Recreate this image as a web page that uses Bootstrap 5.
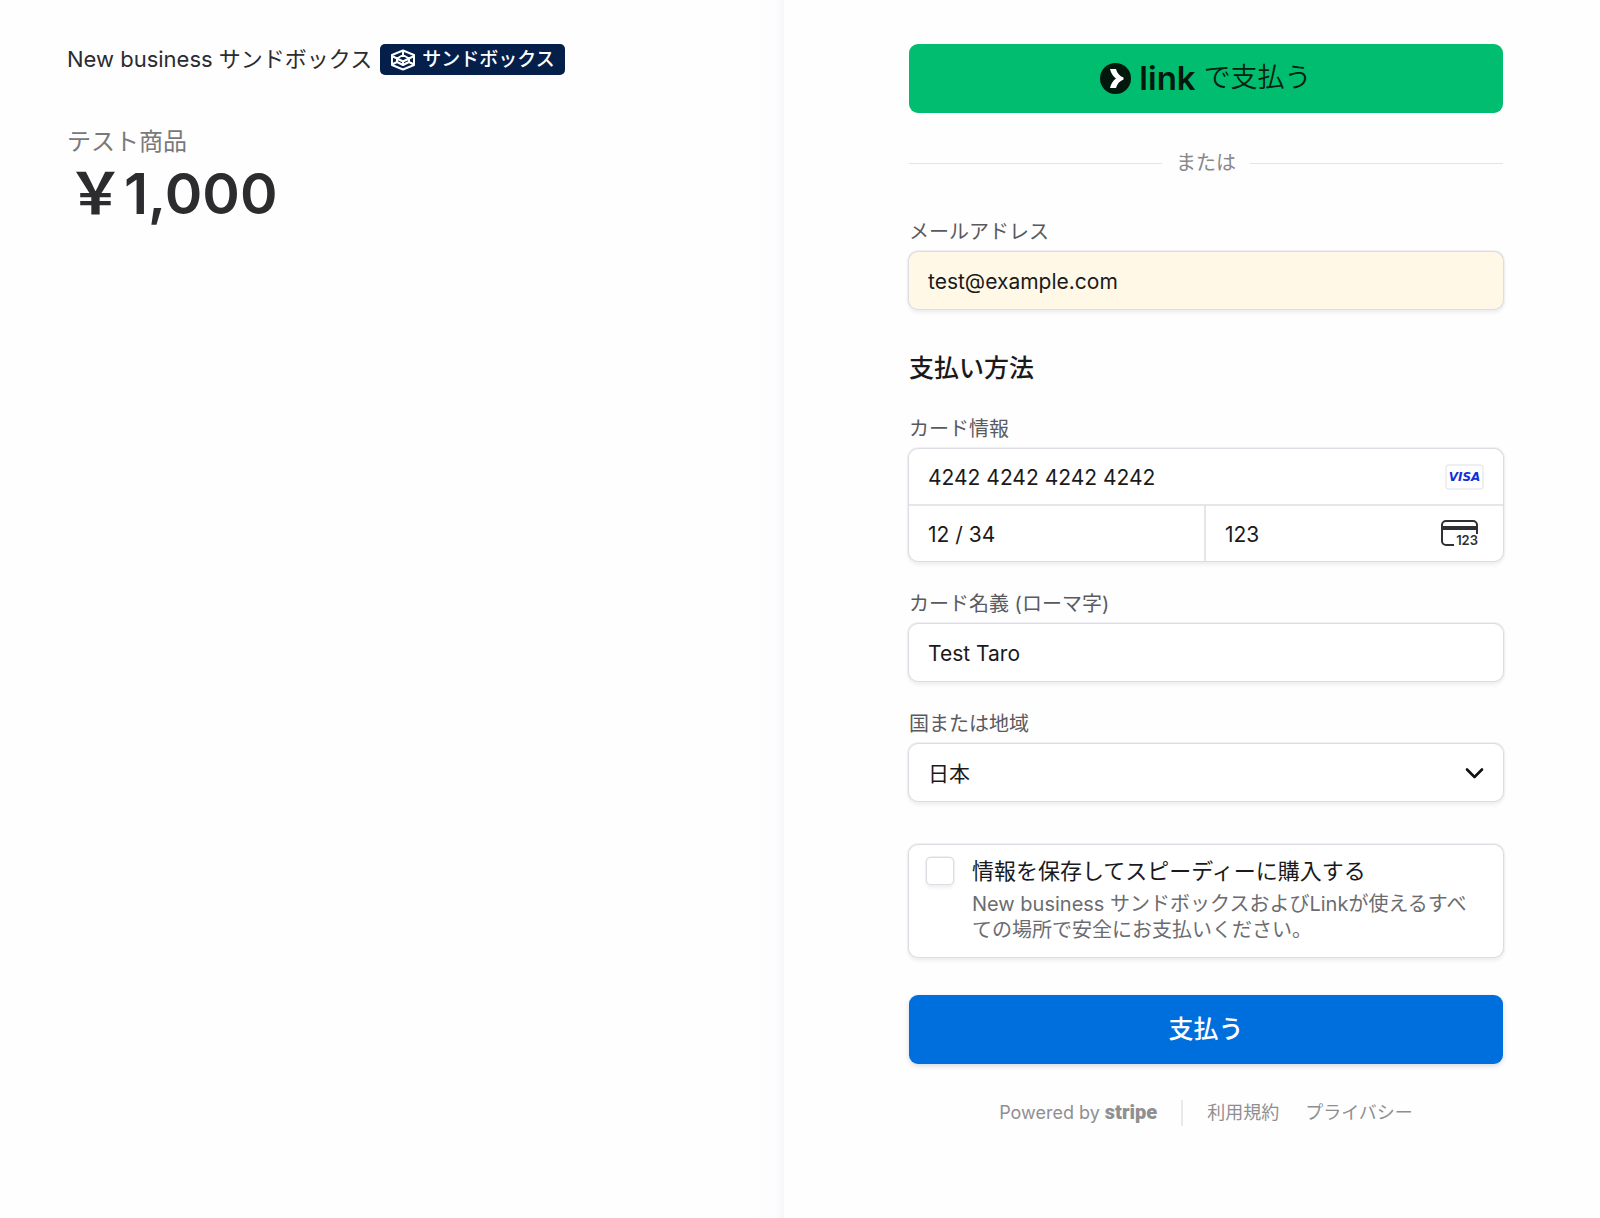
<!DOCTYPE html>
<html lang="ja">
<head>
<meta charset="utf-8">
<meta name="viewport" content="width=device-width, initial-scale=1">
<title>New business サンドボックス</title>
<link href="https://cdn.jsdelivr.net/npm/bootstrap@5.3.0/dist/css/bootstrap.min.css" rel="stylesheet">
<style>
  body { font-family: Inter, "Noto Sans CJK JP", sans-serif; font-size: 20px; line-height: 26px; color: #1a1a1c; background: #fefefe; }
  .summary { padding: 44px 67px; background: linear-gradient(to left, #f7f6f9 0, #fdfcfe 10px, #fefefe 28px); }
  @media (min-width: 992px) { .summary { flex: 0 0 49%; } }
  .merchant { font-size: 22px; line-height: 31px; color: #2c2c30; margin-right: 8px; }
  .mode-tag { background: #04204a; color: #fff; font-size: 19px; line-height: 31px; font-weight: 500; border-radius: 5px; padding: 0 10px; gap: 6px; }
  .product { font-size: 24px; line-height: 32px; color: #79797c; margin: 51px 0 0; }
  .price { font-size: 57px; line-height: 66px; font-weight: 600; color: #2c2c2f; margin: 3px 0 0; }
  .pay-col { padding: 44px 97px 44px 125px; }
  .big-btn { height: 69px; border-radius: 9px; border: 0; font-size: 25px; }
  .link-btn, .link-btn:hover { background: #00bd6f; color: #03210f; font-size: 27px; font-weight: 350; }
  .link-word { font-size: 33px; font-weight: 600; color: #02180c; line-height: 1; }
  .or-row { gap: 14px; margin-top: 37px; color: #88888b; }
  .or-row hr { margin: 0; color: #d8d8de; opacity: .7; }
  .field-label { display: block; color: #5a5a5e; margin-bottom: 7px; }
  .boxed { background-color: #fff; border-radius: 9px; box-shadow: 0 0 0 1px #dddce2, 0 0 0 2px #f0eff3, 0 3px 4px rgba(40,30,60,.1); }
  .entry, .entry:focus { height: 57px; border: 0; padding: 2px 19px 0; font-size: 21px; color: #1a1a1c; box-shadow: none; background-color: transparent; }
  .boxed.entry, .boxed.entry:focus { background-color: #fff; box-shadow: 0 0 0 1px #dddce2, 0 0 0 2px #f0eff3, 0 3px 4px rgba(40,30,60,.1); border-radius: 9px; }
  .boxed.prefilled, .boxed.prefilled:focus { background-color: #fff8e6; }
  .gap-above { margin-top: 43px; }
  .stack-above { margin-top: 30px; }
  .section-title { font-size: 25px; line-height: 32px; font-weight: 500; margin: 43px 0 32px; }
  .card-box .entry { height: 55px; }
  .line-below { border-bottom: 2px solid #e6e5ea; }
  .line-right { border-right: 2px solid #e6e5ea; }
  .country { appearance: none; cursor: pointer; }
  .chevron { right: 19px; top: 20px; pointer-events: none; }
  .save-box { margin-top: 44px; padding: 12px 30px 14px 18px; gap: 19px; }
  .save-box .form-check-input { width: 26px; height: 26px; margin: 1px 0 0; border: 0; border-radius: 4px; box-shadow: 0 0 0 1px #dddce2, 0 0 0 2px #f0eff3, 0 3px 4px rgba(40,30,60,.1); }
  .save-title { font-size: 22px; line-height: 28px; margin-bottom: 6px; display: block; }
  .save-note { color: #6c6c70; margin: 0; }
  .submit-btn, .submit-btn:hover { background: #006fde; color: #fff; font-weight: 500; margin-top: 38px; box-shadow: 0 2px 5px rgba(40,20,80,.16); }
  .foot { font-size: 18px; color: #8f8f92; margin-top: 35px; }
  .foot a { color: inherit; text-decoration: none; }
  .foot .wordmark { font-family: Roboto, sans-serif; font-weight: 900; font-size: 20px; }
  .foot-legal { border-left: 2px solid #e9e8ec; margin-left: 24px; padding-left: 24px; gap: 26px; }
</style>
<script src="https://cdn.jsdelivr.net/npm/bootstrap@5.3.0/dist/js/bootstrap.bundle.min.js"></script>
</head>
<body>
<div class="container-fluid p-0">
  <div class="row g-0 min-vh-100">
    <section class="col-12 col-lg-6 summary">
      <div class="d-flex align-items-center flex-wrap">
        <span class="merchant">New business サンドボックス</span>
        <span class="mode-tag d-inline-flex align-items-center">
          <svg width="26" height="22" viewBox="0 0 26 22" fill="none" stroke="#fff" stroke-width="2" stroke-linejoin="round" aria-hidden="true"><path d="M13 1.500 24 6V16L13 20.500 2 16V6Z"/><path d="M2 7 13 12.500 24 7M13 12.500V16M13 1.500V6M7 9.500 13 6 19 9.500M2 15.500 7 13V9.500M24 15.500 19 13V9.500M7 13 13 16 19 13"/></svg>
          サンドボックス
        </span>
      </div>
      <p class="product">テスト商品</p>
      <p class="price">￥1,000</p>
    </section>

    <main class="col-12 col-lg pay-col">
      <form onsubmit="return false">
        <button type="button" class="btn big-btn link-btn w-100 d-flex align-items-center justify-content-center p-0">
          <svg class="me-2" width="31" height="31" viewBox="0 0 31 31" aria-hidden="true"><circle cx="15.500" cy="15.500" r="15.500" fill="#02180c"/><path d="M10 6h6c1.200 4.200 3.500 7 7.500 8.600v1.800C19.500 18 17.200 20.800 16 25h-6c1-4.200 3-7.300 6-9.500C13 13.300 11 10.200 10 6Z" fill="#fff"/></svg>
          <span class="link-word me-2">link</span>
          <span>で支払う</span>
        </button>
        <div class="or-row d-flex align-items-center"><hr class="flex-fill"><span>または</span><hr class="flex-fill"></div>

        <div class="gap-above">
          <label class="field-label" for="email">メールアドレス</label>
          <input id="email" type="email" class="form-control entry boxed prefilled" value="test@example.com">
        </div>

        <h2 class="section-title">支払い方法</h2>

        <label class="field-label" for="number">カード情報</label>
        <div class="boxed card-box">
          <div class="d-flex align-items-center line-below">
            <input id="number" class="form-control entry" value="4242 4242 4242 4242">
            <svg class="flex-shrink-0 me-3" width="42" height="26" viewBox="0 0 42 26" role="img" aria-label="Visa"><rect x="1" y="1" width="37" height="24" rx="2" fill="#fff" stroke="#dfdfe8"/><text x="19.500" y="17" text-anchor="middle" font-family="DejaVu Sans, sans-serif" font-size="12" font-weight="700" font-style="italic" fill="#1330d8">VISA</text></svg>
          </div>
          <div class="row g-0">
            <div class="col-6 line-right"><input class="form-control entry" aria-label="有効期限" value="12 / 34"></div>
            <div class="col-6 d-flex align-items-center">
              <input class="form-control entry" aria-label="セキュリティコード" value="123">
              <svg class="flex-shrink-0 me-4" width="38" height="27" viewBox="0 0 38 27" role="img" aria-label="CVC"><path d="M13 25H5a4 4 0 0 1-4-4V5a4 4 0 0 1 4-4h27a4 4 0 0 1 4 4v9" fill="none" stroke="#303034" stroke-width="2"/><path d="M1 6h35v4H1Z" fill="#303034"/><text x="37" y="25" text-anchor="end" font-family="Inter, sans-serif" font-size="13" font-weight="600" fill="#303034">123</text></svg>
            </div>
          </div>
        </div>

        <div class="stack-above">
          <label class="field-label" for="holder">カード名義 (ローマ字)</label>
          <input id="holder" class="form-control entry boxed" value="Test Taro">
        </div>

        <div class="stack-above">
          <label class="field-label" for="country">国または地域</label>
          <div class="position-relative">
            <select id="country" class="form-control entry boxed country"><option>日本</option></select>
            <svg class="chevron position-absolute" width="19" height="19" viewBox="0 0 19 19" aria-hidden="true"><path d="M2 5.500 9.500 13 17 5.500" fill="none" stroke="#111" stroke-width="2.600" stroke-linecap="round" stroke-linejoin="round"/></svg>
          </div>
        </div>

        <div class="boxed save-box d-flex align-items-start">
          <input id="save" type="checkbox" class="form-check-input flex-shrink-0">
          <div>
            <label class="save-title" for="save">情報を保存してスピーディーに購入する</label>
            <p class="save-note">New business サンドボックスおよびLinkが使えるすべての場所で安全にお支払いください。</p>
          </div>
        </div>

        <button type="submit" class="btn big-btn submit-btn w-100">支払う</button>
      </form>

      <footer class="foot d-flex justify-content-center align-items-center">
        <a href="#">Powered by <span class="wordmark">stripe</span></a>
        <div class="foot-legal d-flex"><a href="#">利用規約</a><a href="#">プライバシー</a></div>
      </footer>
    </main>
  </div>
</div>
</body>
</html>
